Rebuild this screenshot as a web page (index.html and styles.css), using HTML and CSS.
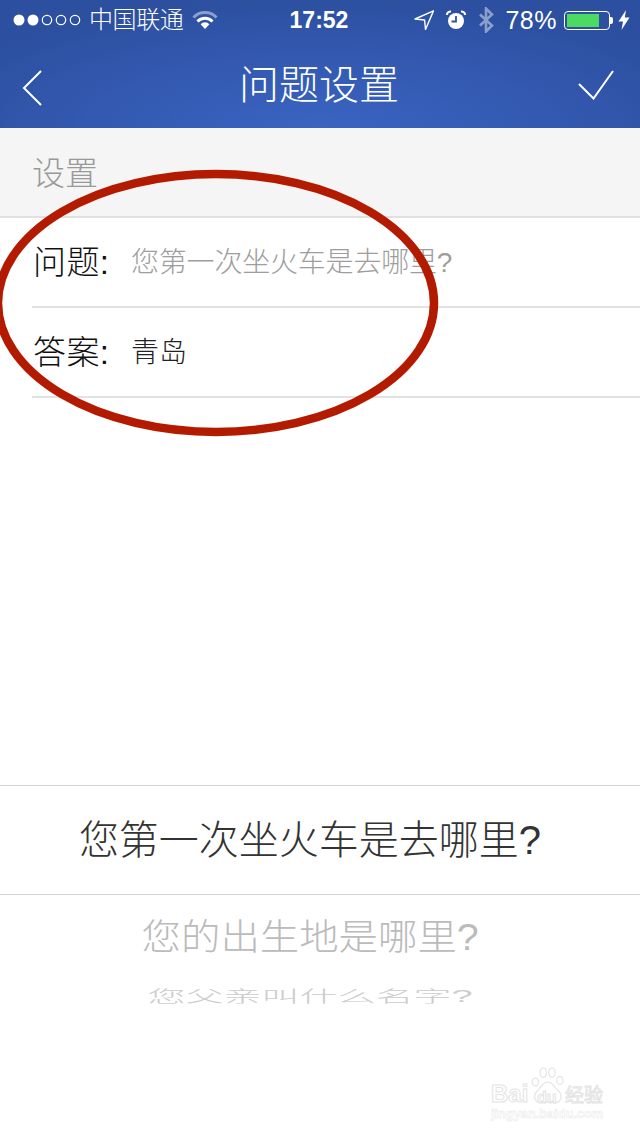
FILE: index.html
```html
<!DOCTYPE html>
<html lang="zh-CN">
<head>
<meta charset="utf-8">
<title>问题设置</title>
<link rel="stylesheet" href="styles.css">
</head>
<body>
<div class="page">
  <header class="header">
    <div class="status">
      <div class="status-left">
        <svg class="signal" width="70" height="14" viewBox="0 0 70 14"><circle cx="6" cy="7" r="5.5" fill="#fff"/><circle cx="20" cy="7" r="5.5" fill="#fff"/><circle cx="34" cy="7" r="4.7" fill="none" stroke="#fff" stroke-width="1.2"/><circle cx="48" cy="7" r="4.7" fill="none" stroke="#fff" stroke-width="1.2"/><circle cx="62" cy="7" r="4.7" fill="none" stroke="#fff" stroke-width="1.2"/></svg>
        <span class="carrier">中国联通</span>
        <svg class="wifi" width="26" height="20" viewBox="0 0 26 20"><path d="M1.5 7.5 A16 16 0 0 1 24.5 7.5" fill="none" stroke="#fff" stroke-opacity=".45" stroke-width="3"/><path d="M5.5 11.5 A10.5 10.5 0 0 1 20.5 11.5" fill="none" stroke="#fff" stroke-width="3"/><path d="M13 19 L8.6 14.2 A6 6 0 0 1 17.4 14.2 Z" fill="#fff"/></svg>
      </div>
      <span class="time">17:52</span>
      <div class="status-right">
        <svg width="20" height="20" viewBox="0 0 20 20"><path d="M19.5 .8 L1 9 L10.6 10 L11.5 19.5 Z" fill="none" stroke="#fff" stroke-width="1.4" stroke-linejoin="round"/></svg>
        <svg class="alarm" width="20" height="20" viewBox="0 0 20 20"><circle cx="10" cy="11" r="8" fill="#fff"/><path d="M10 6v5.5H5.5" fill="none" stroke="#2f54a8" stroke-width="1.8"/><path d="M.8 5 A4 4 0 0 1 5 1.4 M19.2 5 A4 4 0 0 0 15 1.4" fill="none" stroke="#fff" stroke-width="2"/></svg>
        <svg class="bluetooth" width="16" height="26" viewBox="0 0 16 26"><path d="M2 7.5 L14 18.5 L8 24.5 V1.5 L14 7.5 L2 18.5" fill="none" stroke="#fff" stroke-opacity=".45" stroke-width="2.6"/></svg>
        <span class="percent">78%</span>
        <div class="battery"><div class="battery-fill"></div></div>
        <div class="battery-nub"></div>
        <svg class="bolt" width="12" height="20" viewBox="0 0 12 20"><path d="M8 0 L.5 11.5 H5 L3.5 20 L11.5 7.5 H6.8 Z" fill="#fff"/></svg>
      </div>
    </div>
    <nav class="nav">
      <svg class="back" width="20" height="36" viewBox="0 0 20 36"><path d="M19 1 L2 18 L19 35" fill="none" stroke="#fff" stroke-width="2"/></svg>
      <h1 class="title">问题设置</h1>
      <svg class="check" width="36" height="30" viewBox="0 0 36 30"><path d="M1 14 L15.5 28.5 L35 1" fill="none" stroke="#fff" stroke-width="2"/></svg>
    </nav>
  </header>

  <section class="group-head">设置</section>
  <section class="form">
    <div class="row">
      <span class="label">问题:</span>
      <span class="value placeholder">您第一次坐火车是去哪里?</span>
    </div>
    <div class="row">
      <span class="label">答案:</span>
      <span class="value">青岛</span>
    </div>
  </section>

  <section class="picker">
    <div class="pick pick-current">您第一次坐火车是去哪里?</div>
    <div class="pick pick-next">您的出生地是哪里?</div>
    <div class="pick-clip"><div class="pick-far">您父亲叫什么名字?</div></div>
  </section>

  <svg class="ring" width="460" height="280" viewBox="0 0 460 280"><ellipse cx="226" cy="137" rx="218" ry="129" fill="none" stroke="#b31b00" stroke-width="8.5"/></svg>

  <div class="watermark">
    <div class="wm-top">
      <span class="wm-bai">Bai</span>
      <svg class="wm-paw" width="36" height="38" viewBox="0 0 42 48"><g fill="none" stroke="#e6e6e6" stroke-width="1.6"><ellipse cx="5" cy="19" rx="4" ry="5"/><ellipse cx="15" cy="7" rx="4" ry="6"/><ellipse cx="26" cy="7" rx="4" ry="6"/><ellipse cx="36" cy="17" rx="4" ry="5"/><path d="M21 19 C13 19 12 27 7 31 C1 37 5 46 14 45 C18 44 24 44 28 45 C37 46 40 37 35 31 C29 27 28 19 21 19 Z"/></g></svg>
      <span class="wm-du">du</span>
      <span class="wm-cn">经验</span>
    </div>
    <div class="wm-url">jingyan.baidu.com</div>
  </div>
</div>
</body>
</html>
```
FILE: styles.css
```css
* { box-sizing: border-box; margin: 0; padding: 0; }
html, body { background: #fff; }
.page {
  position: relative;
  width: 640px;
  height: 1136px;
  overflow: hidden;
  display: flex;
  flex-direction: column;
  background: #fff;
  font-family: "Liberation Sans", "Noto Sans CJK SC", sans-serif;
  font-weight: 300;
}
.header {
  height: 128px;
  color: #fff;
  background: radial-gradient(ellipse 420px 130px at 320px 128px, #3a64c2 0%, #3359b0 55%, #2c4f9f 100%);
}
.status {
  height: 40px;
  display: grid;
  grid-template-columns: 1fr auto 1fr;
  align-items: center;
  padding: 0 10px 0 13px;
}
.status-left, .status-right { display: flex; align-items: center; }
.status-right { justify-content: flex-end; }
.carrier { font-size: 24px; line-height: 40px; margin-left: 6px; letter-spacing: -.4px; }
.wifi { margin-left: 9px; }
.time {
  font-family: "Liberation Sans", sans-serif;
  font-weight: 700;
  font-size: 23px;
  line-height: 40px;
  margin-right: 5px;
}
.alarm { margin-left: 12px; }
.bluetooth { margin-left: 12px; }
.percent {
  font-family: "Liberation Sans", sans-serif;
  font-weight: 400;
  font-size: 25px;
  letter-spacing: .5px;
  line-height: 40px;
  margin-left: 11px;
}
.battery {
  width: 46px;
  height: 19px;
  margin-left: 7px;
  padding: 2px;
  border: 1px solid #fff;
  border-radius: 4px;
}
.battery-fill { width: 32px; height: 100%; background: #4cd964; }
.battery-nub { width: 3px; height: 7px; background: #fff; border-radius: 0 2px 2px 0; }
.bolt { margin-left: 5px; }
.nav {
  height: 88px;
  display: grid;
  grid-template-columns: 1fr auto 1fr;
  align-items: center;
  padding: 0 26px 0 22px;
}
.back { justify-self: start; margin-top: 8px; }
.check { justify-self: end; margin-top: 2px; }
.title { font-size: 40px; font-weight: 300; line-height: 86px; margin-top: 2px; padding-left: 2px; }
.group-head {
  height: 90px;
  padding: 0 32px 3px;
  display: flex;
  align-items: center;
  background: #f5f5f5;
  border-bottom: 2px solid #e0e0e0;
  color: #999;
  font-size: 33px;
}
.form { padding-left: 32px; }
.row {
  height: 90px;
  display: flex;
  align-items: center;
  padding-bottom: 4px;
  border-bottom: 2px solid #e2e2e2;
}
.label { width: 98px; margin-left: 1px; color: #111; font-size: 33px; letter-spacing: .4px; white-space: nowrap; }
.value { color: #222; font-size: 28px; white-space: nowrap; }
.placeholder { color: #9e9e9e; letter-spacing: -.2px; }
.picker { margin-top: 387px; border-top: 1px solid #d2d2d2; text-align: center; white-space: nowrap; }
.pick { font-size: 40px; padding-right: 20px; }
.pick-current {
  height: 109px;
  line-height: 109px;
  color: #333;
  border-bottom: 1px solid #d2d2d2;
}
.pick-next {
  height: 80px;
  line-height: 85px;
  color: #bbb;
  transform: scale(.985, .92);
}
.pick-clip { height: 30px; overflow: hidden; padding-right: 20px; }
.pick-far {
  font-size: 38px;
  line-height: 44px;
  color: #ccc;
  transform: scaleY(.42);
  transform-origin: 50% 0;
  margin-top: 12px;
}
.ring { position: absolute; left: -10px; top: 166px; }
.watermark {
  position: absolute;
  left: 491px;
  top: 1064px;
  width: 120px;
  font-family: "Liberation Sans", sans-serif;
  font-weight: 700;
  color: transparent;
  -webkit-text-stroke: 1px #e4e4e4;
}
.wm-top { position: relative; height: 42px; }
.wm-bai { position: absolute; left: 0; top: 15px; font-size: 24px; line-height: 30px; }
.wm-paw { position: absolute; left: 39px; top: 3px; }
.wm-du { position: absolute; left: 46px; top: 24px; font-size: 16px; line-height: 20px; }
.wm-cn {
  position: absolute;
  left: 74px;
  top: 15px;
  font-family: "Noto Sans CJK SC", sans-serif;
  font-size: 19px;
  line-height: 30px;
  font-weight: 400;
}
.wm-url {
  font-size: 12.8px;
  line-height: 16px;
  white-space: nowrap;
  -webkit-text-stroke: .5px #e8e8e8;
}
```
